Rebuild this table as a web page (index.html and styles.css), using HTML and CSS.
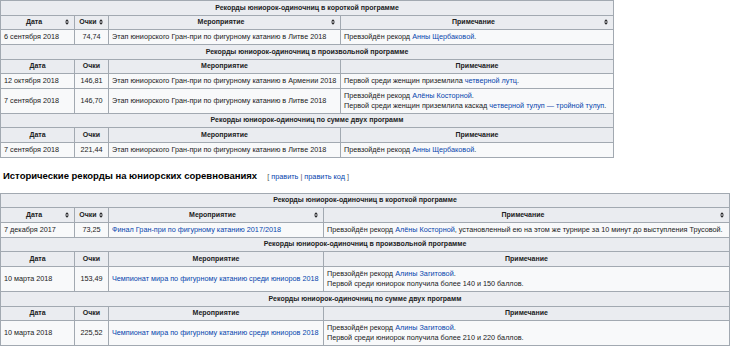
FILE: index.html
```html
<!DOCTYPE html>
<html lang="ru">
<head>
<meta charset="utf-8">
<link rel="stylesheet" href="styles.css">
</head>
<body>
<div class="page">
<table class="wikitable t1">
  <colgroup><col class="c-date"><col class="c-pts"><col class="c-ev1"><col></colgroup>
  <tr><th colspan="4" class="cap">Рекорды юниорок-одиночниц в короткой программе</th></tr>
  <tr>
    <th class="sort">Дата<svg class="si" viewBox="0 0 5 7"><path d="M0 3 L2.5 0 L5 3 Z M0 4 L2.5 7 L5 4 Z"/></svg></th>
    <th class="sort">Очки<svg class="si" viewBox="0 0 5 7"><path d="M0 3 L2.5 0 L5 3 Z M0 4 L2.5 7 L5 4 Z"/></svg></th>
    <th class="sort">Мероприятие<svg class="si" viewBox="0 0 5 7"><path d="M0 3 L2.5 0 L5 3 Z M0 4 L2.5 7 L5 4 Z"/></svg></th>
    <th class="sort">Примечание<svg class="si" viewBox="0 0 5 7"><path d="M0 3 L2.5 0 L5 3 Z M0 4 L2.5 7 L5 4 Z"/></svg></th>
  </tr>
  <tr><td>6 сентября 2018</td><td class="pts">74,74</td><td>Этап юниорского Гран-при по фигурному катанию в Литве 2018</td><td>Превзойдён рекорд <a href="#">Анны Щербаковой</a>.</td></tr>
  <tr><th colspan="4" class="cap">Рекорды юниорок-одиночниц в произвольной программе</th></tr>
  <tr><th>Дата</th><th>Очки</th><th>Мероприятие</th><th>Примечание</th></tr>
  <tr><td>12 октября 2018</td><td class="pts">146,81</td><td>Этап юниорского Гран-при по фигурному катанию в Армении 2018</td><td>Первой среди женщин приземлила <a href="#">четверной лутц</a>.</td></tr>
  <tr><td>7 сентября 2018</td><td class="pts">146,70</td><td>Этап юниорского Гран-при по фигурному катанию в Литве 2018</td><td>Превзойдён рекорд <a href="#">Алёны Косторной</a>.<br>Первой среди женщин приземлила каскад <a href="#">четверной тулуп — тройной тулуп</a>.</td></tr>
  <tr><th colspan="4" class="cap">Рекорды юниорок-одиночниц по сумме двух программ</th></tr>
  <tr><th>Дата</th><th>Очки</th><th>Мероприятие</th><th>Примечание</th></tr>
  <tr><td>7 сентября 2018</td><td class="pts">221,44</td><td>Этап юниорского Гран-при по фигурному катанию в Литве 2018</td><td>Превзойдён рекорд <a href="#">Анны Щербаковой</a>.</td></tr>
</table>

<h3 class="section"><span class="headline">Исторические рекорды на юниорских соревнованиях</span><span class="editsection"><span class="br">[</span> <a href="#">править</a> <span class="br">|</span> <a href="#">править код</a> <span class="br">]</span></span></h3>

<table class="wikitable t2">
  <colgroup><col class="c-date"><col class="c-pts"><col class="c-ev2"><col></colgroup>
  <tr><th colspan="4" class="cap">Рекорды юниорок-одиночниц в короткой программе</th></tr>
  <tr>
    <th class="sort">Дата<svg class="si" viewBox="0 0 5 7"><path d="M0 3 L2.5 0 L5 3 Z M0 4 L2.5 7 L5 4 Z"/></svg></th>
    <th class="sort">Очки<svg class="si" viewBox="0 0 5 7"><path d="M0 3 L2.5 0 L5 3 Z M0 4 L2.5 7 L5 4 Z"/></svg></th>
    <th class="sort">Мероприятие<svg class="si" viewBox="0 0 5 7"><path d="M0 3 L2.5 0 L5 3 Z M0 4 L2.5 7 L5 4 Z"/></svg></th>
    <th class="sort">Примечание<svg class="si" viewBox="0 0 5 7"><path d="M0 3 L2.5 0 L5 3 Z M0 4 L2.5 7 L5 4 Z"/></svg></th>
  </tr>
  <tr><td>7 декабря 2017</td><td class="pts">73,25</td><td><a href="#">Финал Гран-при по фигурному катанию 2017/2018</a></td><td>Превзойдён рекорд <a href="#">Алёны Косторной</a>, установленный ею на этом же турнире за 10 минут до выступления Трусовой.</td></tr>
  <tr><th colspan="4" class="cap">Рекорды юниорок-одиночниц в произвольной программе</th></tr>
  <tr><th>Дата</th><th>Очки</th><th>Мероприятие</th><th>Примечание</th></tr>
  <tr><td>10 марта 2018</td><td class="pts">153,49</td><td><a href="#">Чемпионат мира по фигурному катанию среди юниоров 2018</a></td><td>Превзойдён рекорд <a href="#">Алины Загитовой</a>.<br>Первой среди юниорок получила более 140 и 150 баллов.</td></tr>
  <tr><th colspan="4" class="cap">Рекорды юниорок-одиночниц по сумме двух программ</th></tr>
  <tr><th>Дата</th><th>Очки</th><th>Мероприятие</th><th>Примечание</th></tr>
  <tr><td>10 марта 2018</td><td class="pts">225,52</td><td><a href="#">Чемпионат мира по фигурному катанию среди юниоров 2018</a></td><td>Превзойдён рекорд <a href="#">Алины Загитовой</a>.<br>Первой среди юниорок получила более 210 и 220 баллов.</td></tr>
</table>
</div>
</body>
</html>
```
FILE: styles.css
```css
html, body {
  margin: 0;
  padding: 0;
  background: #ffffff;
}
body {
  font-family: "Liberation Sans", Arial, sans-serif;
  color: #202122;
}
.page {
  padding: 0;
}
a {
  color: #0645ad;
  text-decoration: none;
}
.wikitable {
  border-collapse: collapse;
  table-layout: fixed;
  background: #f8f9fa;
  border: 1px solid #a2a9b1;
  font-size: 7px;
  line-height: 10.33px;
}
.t1 { width: 614px; }
.t2 { width: 730px; }
.c-date { width: 74px; }
.c-pts { width: 34px; }
.c-ev1 { width: 232px; }
.c-ev2 { width: 215px; }
.wikitable th,
.wikitable td {
  border: 1px solid #a2a9b1;
  padding: 1.67px 3px;
  white-space: nowrap;
  overflow: hidden;
}
.wikitable th {
  background: #eaecf0;
  font-weight: bold;
  text-align: center;
}
.wikitable td {
  text-align: left;
  font-size: 7.25px;
}
.wikitable td.pts {
  text-align: center;
}
.wikitable th.sort {
  position: relative;
  padding-right: 10px;
}
.si {
  position: absolute;
  right: 5px;
  top: 50%;
  width: 4px;
  height: 6px;
  margin-top: -3px;
  fill: #202122;
}
.section {
  margin: 11px 0 10px 3px;
  font-size: 9.5px;
  line-height: 13px;
  font-weight: bold;
  color: #000000;
}
.editsection {
  font-size: 7.3px;
  font-weight: normal;
  margin-left: 10px;
}
.editsection .br {
  color: #54595d;
}
```
